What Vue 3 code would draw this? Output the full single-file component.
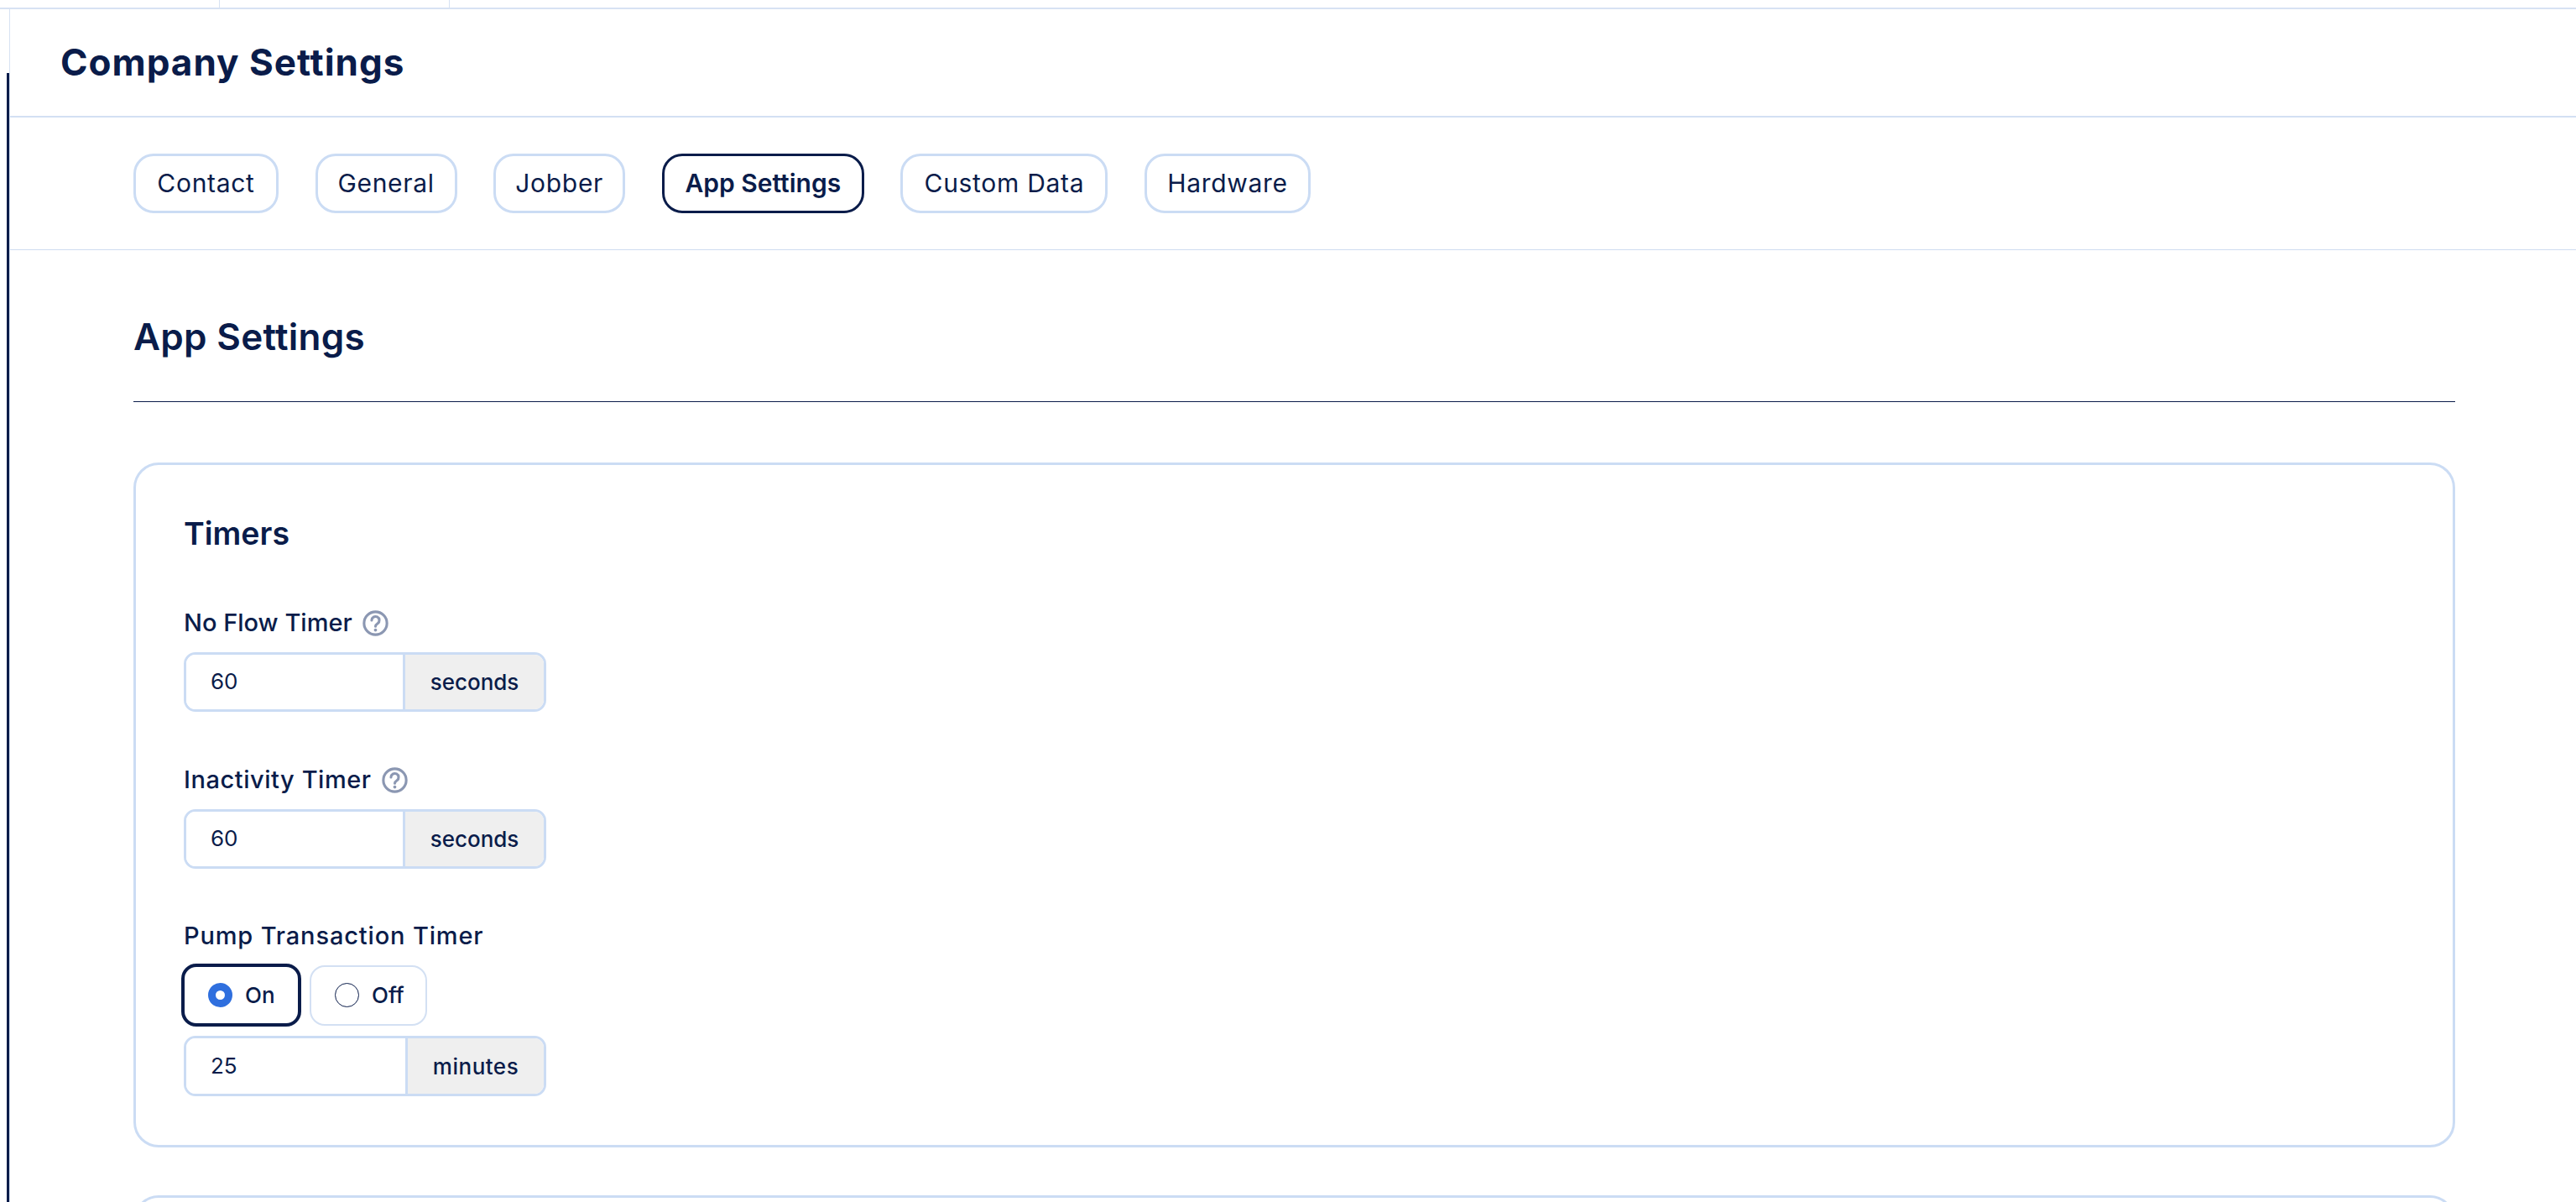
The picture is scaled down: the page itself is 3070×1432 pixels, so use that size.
<script setup>
const tabs = [
  { label: 'Contact', width: 173 },
  { label: 'General', width: 169 },
  { label: 'Jobber', width: 157 },
  { label: 'App Settings', width: 241, active: true },
  { label: 'Custom Data', width: 247 },
  { label: 'Hardware', width: 198 },
]
</script>

<template>
  <div class="page">
    <div class="strip">
      <span class="tick tick-a"></span>
      <span class="tick tick-b"></span>
    </div>
    <div class="shell">
      <aside class="rail"><span class="rail-bar"></span></aside>
      <main class="main">
        <header class="header"><h1>Company Settings</h1></header>
        <nav class="tabs">
          <button
            v-for="t in tabs"
            :key="t.label"
            class="tab"
            :class="{ active: t.active }"
            :style="{ width: t.width + 'px' }"
          >{{ t.label }}</button>
        </nav>
        <section class="content">
          <h2>App Settings</h2>
          <div class="rule"></div>
          <div class="card">
            <h3>Timers</h3>
            <div class="field first">
              <label>No Flow Timer
                <svg class="help" viewBox="0 0 30 30" fill="none">
                  <circle cx="15" cy="15" r="13.2" stroke="#8b97b2" stroke-width="3" />
                  <path d="M10.6 11.6a4.4 4.4 0 1 1 7 3.6c-1.5 1-2.6 1.7-2.6 3.4" stroke="#8b97b2" stroke-width="3" stroke-linecap="round" />
                  <circle cx="15" cy="22.8" r="1.8" fill="#8b97b2" />
                </svg>
              </label>
              <div class="group">
                <input class="value" value="60" readonly />
                <span class="addon">seconds</span>
              </div>
            </div>
            <div class="field second">
              <label>Inactivity Timer
                <svg class="help" viewBox="0 0 30 30" fill="none">
                  <circle cx="15" cy="15" r="13.2" stroke="#8b97b2" stroke-width="3" />
                  <path d="M10.6 11.6a4.4 4.4 0 1 1 7 3.6c-1.5 1-2.6 1.7-2.6 3.4" stroke="#8b97b2" stroke-width="3" stroke-linecap="round" />
                  <circle cx="15" cy="22.8" r="1.8" fill="#8b97b2" />
                </svg>
              </label>
              <div class="group">
                <input class="value" value="60" readonly />
                <span class="addon">seconds</span>
              </div>
            </div>
            <div class="field third">
              <label>Pump Transaction Timer</label>
              <div class="radios">
                <div class="radio on"><span class="dot"></span>On</div>
                <div class="radio"><span class="dot"></span>Off</div>
              </div>
              <div class="group wide">
                <input class="value" value="25" readonly />
                <span class="addon">minutes</span>
              </div>
            </div>
          </div>
          <div class="card next"></div>
        </section>
      </main>
    </div>
  </div>
</template>

<style>
html, body { margin: 0; background: #fff; overflow: hidden; }
</style>

<style scoped>
.page {
  width: 3070px;
  height: 1432px;
  overflow: hidden;
  display: flex;
  flex-direction: column;
  font-family: Inter, "Noto Sans", sans-serif;
  color: #0a1c4a;
  background: #fff;
}
.strip {
  height: 9px;
  flex: none;
  border-bottom: 2px solid #d7e2f3;
  display: flex;
}
.tick { display: block; height: 9px; border-right: 1px solid #d7e2f3; }
.tick-a { width: 261px; }
.tick-b { width: 273px; }
.shell { flex: 1; display: flex; min-height: 0; }
.rail {
  width: 11px;
  flex: none;
  border-right: 1px solid #d7e2f3;
  padding-top: 76px;
  box-sizing: content-box;
}
.rail-bar { display: block; width: 3px; height: 100%; margin-left: 8px; background: #0a1c4a; }
.main { flex: 1; min-width: 0; }
.header {
  height: 129px;
  box-sizing: border-box;
  border-bottom: 2px solid #d3e0f3;
  padding: 0 0 2px 60px;
  display: flex;
  align-items: center;
}
h1 { margin: 0; font-size: 44px; font-weight: 700; letter-spacing: 1px; line-height: 1; }
.tabs {
  height: 158px;
  box-sizing: border-box;
  border-bottom: 1px solid #cfdcf0;
  padding: 43px 0 0 147px;
  display: flex;
  gap: 43.6px;
  align-items: flex-start;
}
.tab {
  height: 71px;
  border: 3px solid #cbdcf4;
  border-radius: 24px;
  background: #fff;
  color: #0a1c4a;
  font: 400 30px Inter, "Noto Sans", sans-serif;
  letter-spacing: 0.7px;
  padding: 0 0 2px;
  flex: none;
}
.tab.active { border-color: #0a1c4a; font-weight: 600; letter-spacing: 0; }
.content { padding: 0 144px 0 147px; }
h2 { margin: 0; padding-top: 78px; font-size: 44px; line-height: 50px; font-weight: 600; letter-spacing: 0.3px; }
.rule { margin-top: 52px; height: 1px; background: #0a1c4a; }
.card {
  margin-top: 72px;
  height: 816px;
  box-sizing: border-box;
  border: 3px solid #cbdcf4;
  border-radius: 30px;
  padding: 0 0 0 57px;
}
.card.next { margin-top: 57px; height: 200px; }
h3 { margin: 0; padding-top: 60px; font-size: 37.5px; line-height: 44px; font-weight: 600; }
.field { display: flex; flex-direction: column; align-items: flex-start; }
.first { margin-top: 63px; }
.second { margin-top: 60px; }
.third { margin-top: 59px; }
label { display: flex; align-items: center; height: 40px; padding-bottom: 2px; font-size: 29px; font-weight: 500; }
.second label { letter-spacing: 0.55px; }
.third label { letter-spacing: 0.85px; }
.help { width: 31px; height: 31px; margin: 2px 0 0 12px; }
.group {
  margin-top: 14px;
  width: 432px;
  height: 71px;
  box-sizing: border-box;
  border: 3px solid #cbdcf4;
  border-radius: 14px;
  display: flex;
  overflow: hidden;
}
.value {
  flex: 1;
  min-width: 0;
  border: 0;
  outline: 0;
  padding: 0 0 2px 29px;
  font: 400 26px Inter, "Noto Sans", sans-serif;
  color: #0a1c4a;
  background: #fff;
}
.addon {
  width: 168px;
  flex: none;
  box-sizing: border-box;
  border-left: 3px solid #cbdcf4;
  background: #efefef;
  display: flex;
  align-items: center;
  justify-content: center;
  font-size: 26px;
  font-weight: 500;
}
.wide .addon { width: 165px; letter-spacing: 0.5px; }
.radios { display: flex; gap: 10px; margin-top: 12px; margin-left: -3px; align-items: center; }
.radio {
  width: 140px;
  height: 72px;
  box-sizing: border-box;
  border: 2px solid #d3e0f3;
  border-radius: 18px;
  display: flex;
  align-items: center;
  padding-left: 28px;
  gap: 15px;
  font-size: 26px;
  font-weight: 500;
}
.radio.on { width: 143px; height: 75px; border: 4px solid #0a1c4a; padding-left: 28px; }
.dot {
  width: 29px;
  height: 29px;
  box-sizing: border-box;
  border: 1.5px solid #0a1c4a;
  border-radius: 50%;
  background: #fff;
  flex: none;
}
.on .dot { border: 9px solid #2f6fde; }
.wide { margin-top: 11px; height: 72px; }
</style>
